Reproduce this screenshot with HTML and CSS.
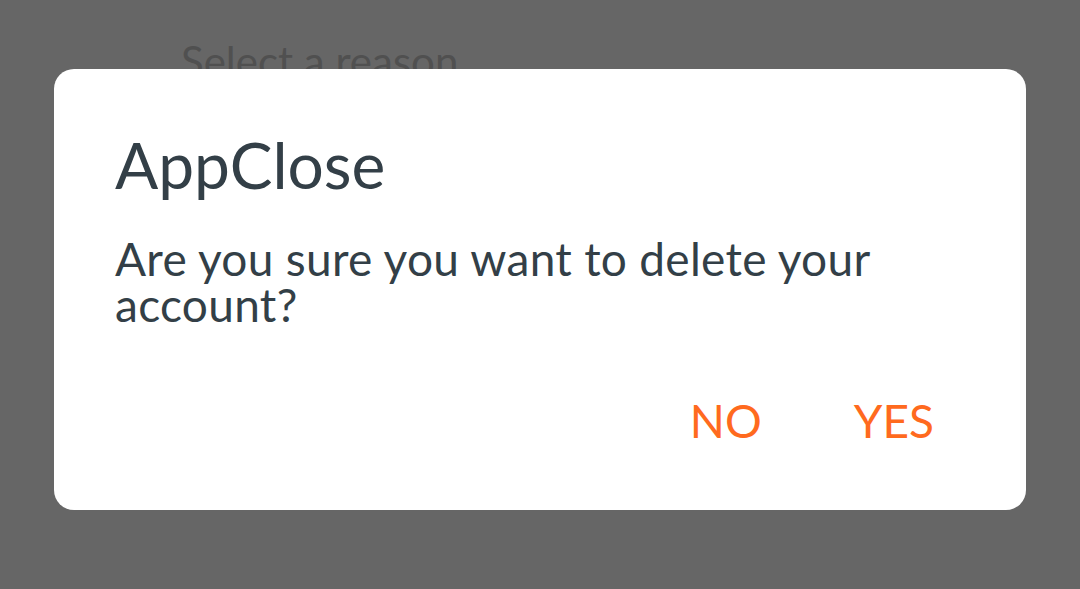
FILE: index.html
```
<!DOCTYPE html>
<html>
<head>
<meta charset="utf-8">
<link rel="stylesheet" href="styles.css">
</head>
<body>
<div class="screen">
  <div class="behind">Select a reason</div>
  <div class="scrim">
    <div class="dialog">
      <h1 class="title">AppClose</h1>
      <p class="message">Are you sure you want to delete your account?</p>
      <div class="actions">
        <button class="btn">NO</button>
        <button class="btn">YES</button>
      </div>
    </div>
  </div>
</div>
</body>
</html>
```
FILE: styles.css
```
html, body {
  margin: 0;
  padding: 0;
}
body {
  width: 1080px;
  height: 589px;
  overflow: hidden;
  background: #666666;
  font-family: "Lato", "Noto Sans", sans-serif;
}
.screen {
  position: relative;
  width: 1080px;
  height: 589px;
}
.behind {
  padding: 35px 0 0 181px;
  font-size: 42px;
  line-height: 52px;
  color: #505050;
}
.scrim {
  position: absolute;
  left: 0;
  top: 0;
  right: 0;
  bottom: 0;
}
.dialog {
  position: absolute;
  left: 54px;
  top: 69px;
  width: 972px;
  height: 441px;
  box-sizing: border-box;
  background: #ffffff;
  border-radius: 20px;
  padding: 64px 92px 0 61px;
  display: flex;
  flex-direction: column;
}
.title {
  margin: 0;
  font-weight: 400;
  font-size: 64px;
  line-height: 64px;
  color: #333f47;
}
.message {
  margin: 39px 0 0 0;
  font-size: 46px;
  line-height: 46px;
  letter-spacing: 0.3px;
  color: #333f47;
}
.actions {
  margin-top: auto;
  margin-bottom: 66px;
  display: flex;
  justify-content: flex-end;
  gap: 92px;
}
.btn {
  border: 0;
  background: none;
  padding: 0;
  font-family: inherit;
  font-size: 46px;
  line-height: 46px;
  color: #ff6a1e;
}
```
